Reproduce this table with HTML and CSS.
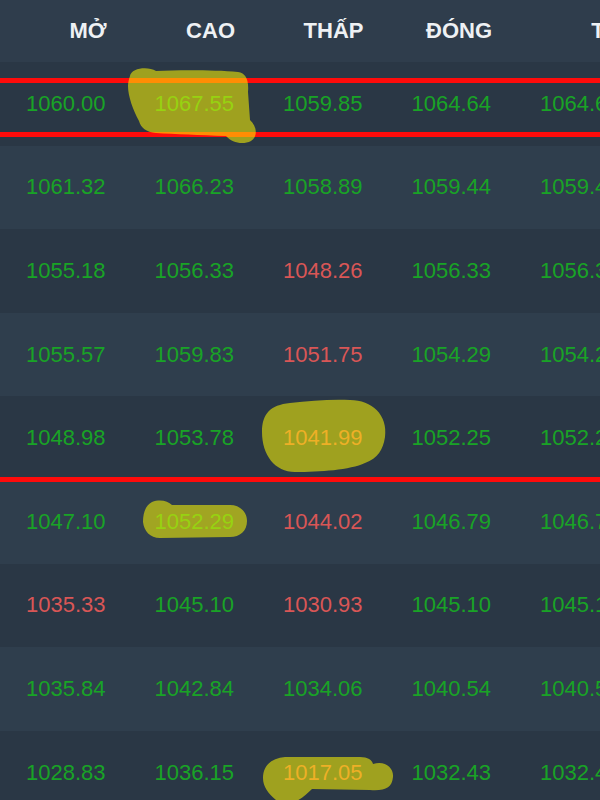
FILE: index.html
```html
<!DOCTYPE html>
<html lang="vi">
<head>
<meta charset="utf-8">
<title>Lịch sử giá</title>
<link rel="stylesheet" href="styles.css">
</head>
<body>
<div class="page">
  <div class="table">
    <div class="row head">
      <div class="cell">MỞ</div><div class="cell">CAO</div><div class="cell">THẤP</div><div class="cell">ĐÓNG</div><div class="cell">TC</div>
    </div>
    <div class="row odd">
      <div class="cell up">1060.00</div><div class="cell up">1067.55</div><div class="cell up">1059.85</div><div class="cell up">1064.64</div><div class="cell up">1064.64</div>
    </div>
    <div class="row even">
      <div class="cell up">1061.32</div><div class="cell up">1066.23</div><div class="cell up">1058.89</div><div class="cell up">1059.44</div><div class="cell up">1059.44</div>
    </div>
    <div class="row odd">
      <div class="cell up">1055.18</div><div class="cell up">1056.33</div><div class="cell down">1048.26</div><div class="cell up">1056.33</div><div class="cell up">1056.33</div>
    </div>
    <div class="row even">
      <div class="cell up">1055.57</div><div class="cell up">1059.83</div><div class="cell down">1051.75</div><div class="cell up">1054.29</div><div class="cell up">1054.29</div>
    </div>
    <div class="row odd">
      <div class="cell up">1048.98</div><div class="cell up">1053.78</div><div class="cell down">1041.99</div><div class="cell up">1052.25</div><div class="cell up">1052.25</div>
    </div>
    <div class="row even">
      <div class="cell up">1047.10</div><div class="cell up">1052.29</div><div class="cell down">1044.02</div><div class="cell up">1046.79</div><div class="cell up">1046.79</div>
    </div>
    <div class="row odd">
      <div class="cell down">1035.33</div><div class="cell up">1045.10</div><div class="cell down">1030.93</div><div class="cell up">1045.10</div><div class="cell up">1045.10</div>
    </div>
    <div class="row even">
      <div class="cell up">1035.84</div><div class="cell up">1042.84</div><div class="cell up">1034.06</div><div class="cell up">1040.54</div><div class="cell up">1040.54</div>
    </div>
    <div class="row odd">
      <div class="cell up">1028.83</div><div class="cell up">1036.15</div><div class="cell down">1017.05</div><div class="cell up">1032.43</div><div class="cell up">1032.43</div>
    </div>
  </div>

  <div class="mark-line line-a"></div>
  <div class="mark-line line-b"></div>
  <div class="mark-line line-c"></div>

  <svg class="highlights" viewBox="0 0 600 800" width="600" height="800" aria-hidden="true">
    <path d="M130 76 C131 68 148 66 156 71 C180 70 215 70 238 72 C246 73 249 80 248 92 L250 120 C257 126 258 137 251 141 C243 145 232 143 226 136 C200 135 175 134 156 133 C146 132 141 128 139 121 C133 110 128 96 128 86 C128 82 129 79 130 76 Z"/>
    <path d="M152 502 C160 499 168 501 172 505 L230 505 C240 505 247 512 247 521 C247 531 240 537 230 537 L160 538 C150 538 144 531 143 522 C143 512 146 505 152 502 Z"/>
    <path d="M262 432 C262 414 270 405 290 403 C310 401 330 399 350 400 C372 400 388 415 385 437 C383 450 378 458 365 463 C350 470 320 472 295 472 C275 472 262 455 262 432 Z"/>
    <path d="M263 778 C263 765 272 758 285 757 L360 757 C368 757 372 760 373 764 C385 760 394 768 393 777 C392 788 385 791 370 790 L312 789 C306 795 300 800 292 803 L280 803 C270 796 263 788 263 778 Z"/>
  </svg>
</div>
</body>
</html>
```

FILE: styles.css
```css
html, body {
  margin: 0;
  padding: 0;
  width: 600px;
  height: 800px;
  overflow: hidden;
  background: #2a3745;
}

.page {
  position: relative;
  width: 600px;
  height: 800px;
  overflow: hidden;
  font-family: "Liberation Sans", Arial, sans-serif;
}

.table {
  display: flex;
  flex-direction: column;
  width: 642px;
}

.row {
  display: grid;
  grid-template-columns: repeat(5, 128.5px);
  align-items: center;
  height: 83.6px;
}

.row.head {
  height: 62px;
  background: #2f3d4c;
  color: #eef1f4;
  font-weight: bold;
}

.row.odd {
  background: #2a3745;
}

.row.even {
  background: #2f3e4d;
}

.cell {
  text-align: right;
  padding-right: 23px;
  font-size: 22px;
  line-height: 26px;
  white-space: nowrap;
}

.head .cell {
  padding-right: 22px;
}

.up {
  color: #19a326;
}

.down {
  color: #d95656;
}

.mark-line {
  position: absolute;
  left: 0;
  width: 600px;
  height: 5px;
  background: #ff0b0b;
}

.line-a { top: 78px; }
.line-b { top: 132px; }
.line-c { top: 477px; }

.highlights {
  position: absolute;
  top: 0;
  left: 0;
  pointer-events: none;
}

.highlights path {
  fill: rgba(255, 250, 0, 0.55);
}
```
